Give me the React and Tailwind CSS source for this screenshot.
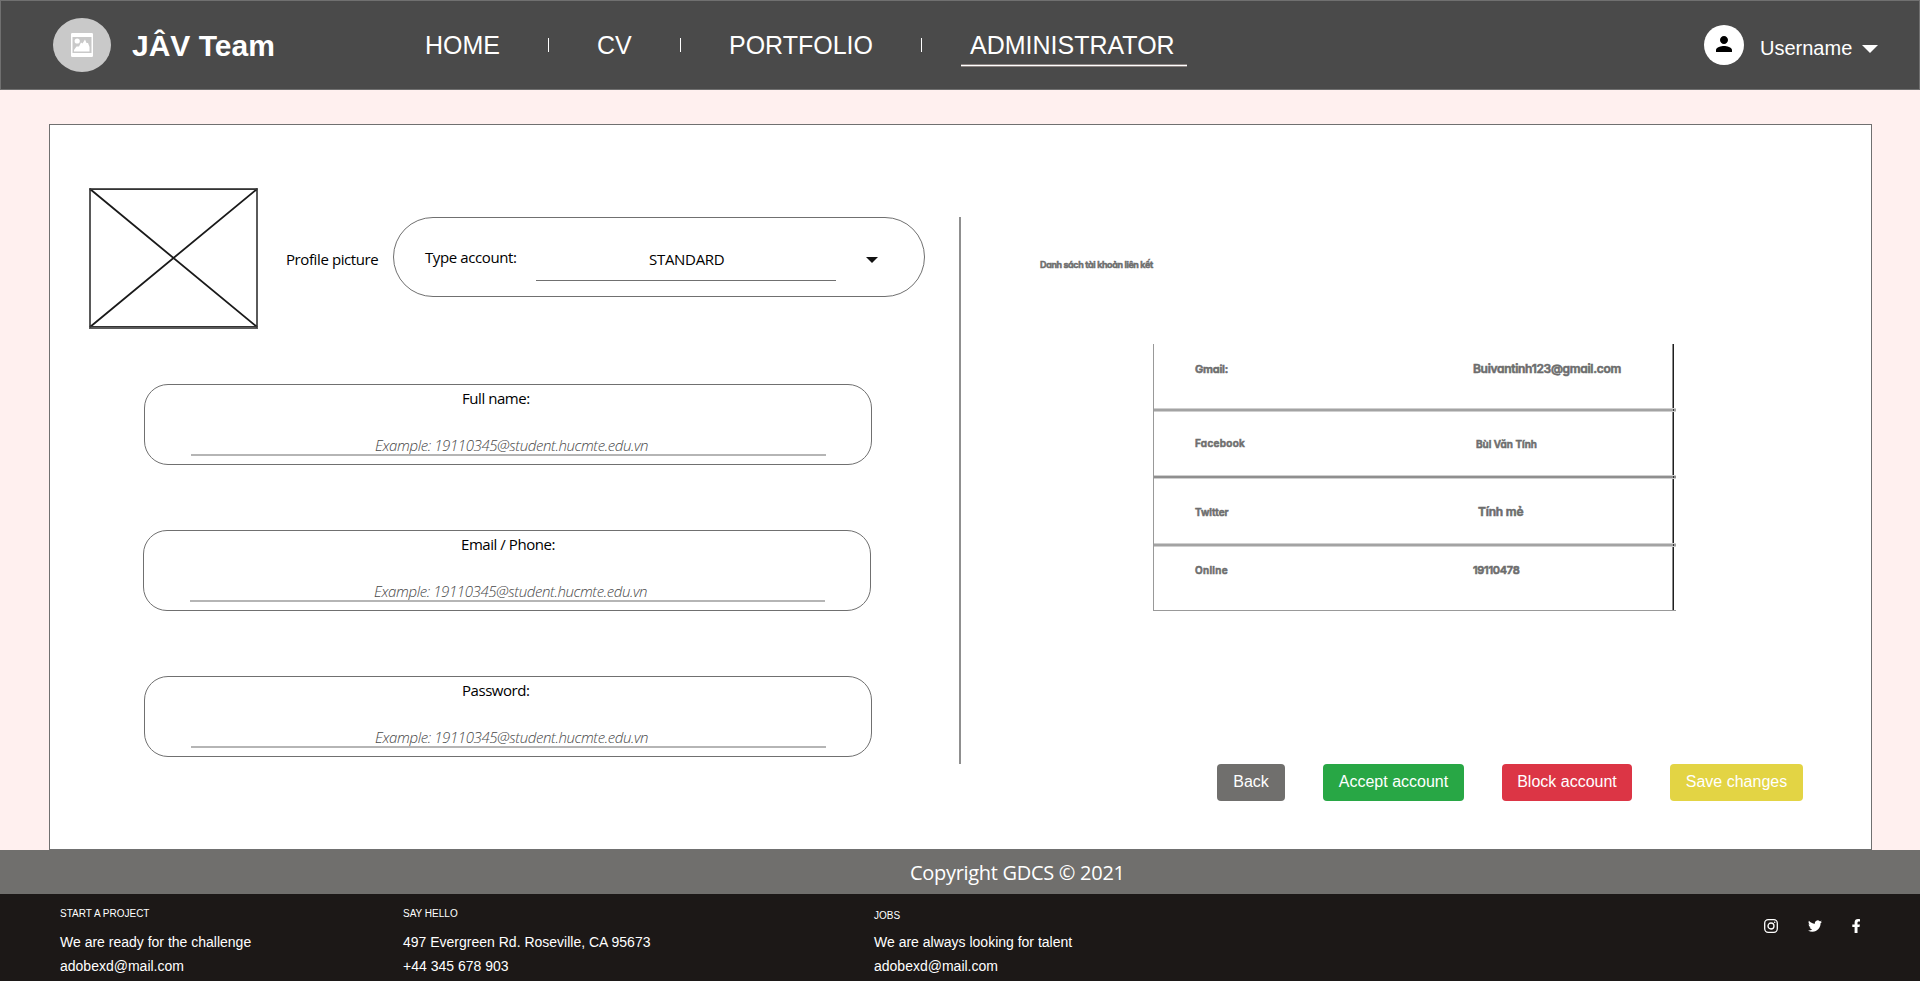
const segoe = "font-['Open_Sans','Noto_Sans',sans-serif]";

function Separator({ className = "" }) {
  return <div className={`mt-[38px] h-[14px] w-px shrink-0 bg-white ${className}`} />;
}

function NavItem({ className, children }) {
  return (
    <a className={`mt-[30px] block shrink-0 whitespace-nowrap text-[25px] leading-[30px] ${className}`}>
      {children}
    </a>
  );
}

function Header() {
  return (
    <header className="h-[90px] w-full border border-[#707070] bg-[#4a4a4a] text-white">
      <div className="-mt-px -ml-px flex h-[90px] items-start">
        <div className="ml-[53px] mt-[18px] flex h-[54px] w-[58px] shrink-0 items-center justify-center rounded-[50%] bg-[#c9c9c9]">
          <svg width="22" height="24" viewBox="0 0 22 24">
            <rect x="0.750" y="0.750" width="20.500" height="22.500" rx="0.500" fill="none" stroke="#fff" strokeWidth="1.500" />
            <path d="M1 1h20v3H1zM1 20h20v3H1z" fill="#fff" />
            <circle cx="6.200" cy="8" r="2.600" fill="#fff" />
            <path d="M3 18.500v-1.500l2.500-3.500h2.500l2-4 1.500 1 2.500-4 1.500 3.500h1.500l1.500 4v4.500z" fill="#fff" />
          </svg>
        </div>
        <div className="ml-[21px] mt-[26px] w-[293px] shrink-0 whitespace-nowrap text-[30px] font-bold leading-[40px]">
          JÂV Team
        </div>
        <NavItem className="w-[123px]">HOME</NavItem>
        <Separator />
        <NavItem className="ml-[48px] w-[83px]">CV</NavItem>
        <Separator />
        <NavItem className="ml-[48px] w-[192px]">PORTFOLIO</NavItem>
        <Separator />
        <div className="ml-[39px] w-[226px] shrink-0">
          <NavItem className="pl-[9px]">ADMINISTRATOR</NavItem>
          <div className="mt-[4px] h-[3px] border-y border-[#8d8583] bg-white" />
        </div>
        <div className="ml-[517px] mt-[25px] flex h-10 w-10 shrink-0 items-center justify-center rounded-full bg-white">
          <svg width="24" height="24" viewBox="0 0 24 24" className="-mt-[3px]">
            <path
              d="M12 12c2.210 0 4-1.790 4-4s-1.790-4-4-4-4 1.790-4 4 1.790 4 4 4zm0 2c-2.670 0-8 1.340-8 4v2h16v-2c0-2.660-5.330-4-8-4z"
              fill="#000"
            />
          </svg>
        </div>
        <div className="ml-[16px] mt-[36px] w-[102px] shrink-0 whitespace-nowrap text-[20px] leading-[24px]">Username</div>
        <svg width="16" height="8" viewBox="0 0 16 8" className="mt-[45px] shrink-0">
          <path d="M0 0h16l-8 8z" fill="#fff" />
        </svg>
      </div>
    </header>
  );
}

function Field({ label, className }) {
  return (
    <div
      className={`h-[81px] w-[728px] rounded-[24px] border border-[#707070] text-[15px] leading-[24px] ${segoe} ${className}`}
    >
      <div className="ml-[317px] mt-[1px] whitespace-nowrap tracking-[-0.45px] text-black">{label}</div>
      <div className="ml-[230px] mt-[23px] whitespace-nowrap font-light italic tracking-[-0.390px] text-[#484848]">
        Example: 19110345@student.hucmte.edu.vn
      </div>
      <div className="-mt-[3px] ml-[46px] h-[2px] w-[635px] bg-[#b5b5b5]" />
    </div>
  );
}

const poppins =
  "font-['Inter',sans-serif] font-semibold text-[#6b6b6b] [font-feature-settings:'cv11'] [-webkit-text-stroke:0.6px_#707070] whitespace-nowrap";

function Row({ height, name, value, nameClass, valueClass }) {
  return (
    <div className={`flex items-start ${height}`}>
      <div className={`w-[319px] shrink-0 pl-[41px] leading-[16px] ${poppins} ${nameClass}`}>{name}</div>
      <div className={`w-[199px] shrink-0 leading-[16px] ${poppins} ${valueClass}`}>{value}</div>
      <div className="h-full w-[2px] border-l border-[#8a8a8a] bg-[#1f1f1f]" />
    </div>
  );
}

function Rule({ color }) {
  return (
    <div className={`flex h-[4px] w-[522px] border-y border-[#cfcfcf] ${color}`}>
      <div className="ml-[519px] h-full w-px bg-[#333]" />
    </div>
  );
}

function LinkedAccounts() {
  return (
    <div className="ml-[192px] w-[523px] border-l border-[#999]">
      <Row height="h-[64px]" name="Gmail:" value="Buivantinh123@gmail.com" nameClass="mt-[17px] text-[11px] tracking-[-0.2px]" valueClass="mt-[17px] text-[12px] tracking-[-0.3px]" />
      <Rule color="bg-[#a3a3a3]" />
      <Row height="h-[63px]" name="Facebook" value="Bùi Văn Tính" nameClass="mt-[23px] text-[10px] tracking-[0.3px]" valueClass="mt-[24px] pl-[3px] text-[10px]" />
      <Rule color="bg-[#8f8f8f]" />
      <Row height="h-[64px]" name="Twitter" value="Tính mẻ" nameClass="mt-[25px] text-[10px]" valueClass="mt-[25px] pl-[5px] text-[12px] tracking-[-0.2px]" />
      <Rule color="bg-[#a3a3a3]" />
      <Row height="h-[63px]" name="Online" value="19110478" nameClass="mt-[15px] text-[10px] tracking-[0.3px]" valueClass="mt-[15px] text-[11px] tracking-[-0.3px]" />
      <div className="h-px w-[522px] bg-[#999]" />
    </div>
  );
}

function Button({ className, children }) {
  return (
    <button className={`h-[37px] shrink-0 whitespace-nowrap rounded-[4px] pb-[2px] text-[16px] leading-[24px] text-white ${className}`}>
      {children}
    </button>
  );
}

function Main() {
  return (
    <main className="h-[760px] bg-[#fff0ef] pl-[49px] pt-[34px]">
      <div className="flex h-[726px] w-[1823px] items-start border border-[#707070] bg-white">
        <section className="w-[909px] shrink-0 pt-[63px]">
          <div className="flex h-[141px] items-start">
            <svg width="169" height="141" viewBox="0 0 169 141" className="ml-[39px] shrink-0">
              <rect x="1" y="1" width="167" height="139" fill="none" stroke="#5a5a5a" strokeWidth="2" />
              <path d="M1 1l167 138M168 1L1 139" stroke="#1a1a1a" strokeWidth="1.800" fill="none" />
              <path d="M1 1.500h167M1 138.500h167" stroke="#333" strokeWidth="1" />
            </svg>
            <div className={`ml-[28px] mt-[59px] w-[107px] shrink-0 whitespace-nowrap text-[15px] leading-[24px] tracking-[-0.4px] text-black ${segoe}`}>
              Profile picture
            </div>
            <div className={`mt-[29px] flex h-[80px] w-[532px] shrink-0 items-start rounded-[40px] border border-[#707070] text-[15px] leading-[24px] text-black ${segoe}`}>
              <div className="ml-[31px] mt-[27px] w-[111px] shrink-0 whitespace-nowrap tracking-[-0.4px]">Type account:</div>
              <div className="mt-[29px] h-[34px] w-[300px] shrink-0 border-b border-[#707070] pl-[113px] tracking-[-0.3px]">STANDARD</div>
              <svg width="12" height="6" viewBox="0 0 12 6" className="ml-[30px] mt-[39px] shrink-0">
                <path d="M0 0h12l-6 6z" fill="#111" />
              </svg>
            </div>
          </div>
          <Field label="Full name:" className="ml-[94px] mt-[55px]" />
          <Field label="Email / Phone:" className="ml-[93px] mt-[65px]" />
          <Field label="Password:" className="ml-[94px] mt-[65px]" />
        </section>
        <div className="mt-[92px] h-[547px] w-[2px] shrink-0 bg-[#8f8f8f]" />
        <section className="w-[910px] shrink-0 pt-[132px]">
          <h2 className={`ml-[79px] text-[9px] leading-[16px] tracking-[-0.370px] ${poppins}`}>Danh sách tài khoản liên kết</h2>
          <div className="h-[71px]" />
          <LinkedAccounts />
          <div className="ml-[256px] mt-[153px] flex items-start">
            <Button className="w-[68px] bg-[#706f6d]">Back</Button>
            <Button className="ml-[38px] w-[141px] bg-[#28a745]">Accept account</Button>
            <Button className="ml-[38px] w-[130px] bg-[#dc3545]">Block account</Button>
            <Button className="ml-[38px] w-[133px] bg-[#e3d444]">Save changes</Button>
          </div>
        </section>
      </div>
    </main>
  );
}

function FooterColumn({ title, lines, className, titleClass }) {
  return (
    <div className={`shrink-0 whitespace-nowrap ${className}`}>
      <div className={`text-[10px] leading-[14px] ${titleClass}`}>{title}</div>
      {lines.map((line) => (
        <div key={line} className="text-[14px] leading-[24px]">
          {line}
        </div>
      ))}
    </div>
  );
}

function Footer() {
  return (
    <footer className="text-white">
      <div className={`h-[44px] bg-[#706f6d] pl-[910px] pt-[8px] text-[20px] leading-[30px] tracking-[-0.3px] ${segoe}`}>
        Copyright GDCS © 2021
      </div>
      <div className="flex h-[87px] items-start bg-[#1c1817]">
        <FooterColumn className="ml-[60px] w-[343px]" titleClass="mt-[13px] mb-[9px]" title="START A PROJECT" lines={["We are ready for the challenge", "adobexd@mail.com"]} />
        <FooterColumn className="w-[471px]" titleClass="mt-[13px] mb-[9px]" title="SAY HELLO" lines={["497 Evergreen Rd. Roseville, CA 95673", "+44 345 678 903"]} />
        <FooterColumn className="w-[890px]" titleClass="mt-[15px] mb-[7px]" title="JOBS" lines={["We are always looking for talent", "adobexd@mail.com"]} />
        <svg width="14" height="14" viewBox="0 0 14 14" className="mt-[25px] shrink-0" fill="none" stroke="#fff">
          <rect x="0.700" y="0.700" width="12.600" height="12.600" rx="3.500" strokeWidth="1.300" />
          <circle cx="7" cy="7" r="3" strokeWidth="1.300" />
          <circle cx="10.700" cy="3.300" r="0.800" fill="#fff" stroke="none" />
        </svg>
        <svg width="14" height="14" viewBox="0 0 24 24" className="ml-[30px] mt-[25px] shrink-0" fill="#fff">
          <path d="M23.950 4.570a10 10 0 01-2.820.770 4.960 4.960 0 002.160-2.720c-.950.550-2 .950-3.130 1.180a4.920 4.920 0 00-8.380 4.480C7.690 8.100 4.070 6.130 1.640 3.160a4.820 4.820 0 00-.670 2.480c0 1.710.870 3.210 2.190 4.100a4.900 4.900 0 01-2.230-.620v.060a4.920 4.920 0 003.950 4.830 5 5 0 01-2.210.080 4.940 4.940 0 004.600 3.420A9.870 9.870 0 010 19.540a13.990 13.990 0 007.550 2.210c9.050 0 14-7.500 14-13.980 0-.210 0-.420-.020-.630a9.940 9.940 0 002.460-2.550z" />
        </svg>
        <svg width="8" height="14" viewBox="0 0 8 14" className="ml-[30px] mt-[25px] shrink-0" fill="#fff">
          <path d="M7.500 7.900l.4-2.500H5.500V3.700c0-.7.300-1.300 1.400-1.300H8V.200S7 0 6 0C4 0 2.600 1.200 2.600 3.400v2H.3v2.500h2.300V14h2.900V7.900z" />
        </svg>
      </div>
    </footer>
  );
}

export default function App() {
  return (
    <div className="h-[981px] w-[1920px] overflow-hidden font-['Liberation_Sans',Arial,sans-serif]">
      <Header />
      <Main />
      <Footer />
    </div>
  );
}
